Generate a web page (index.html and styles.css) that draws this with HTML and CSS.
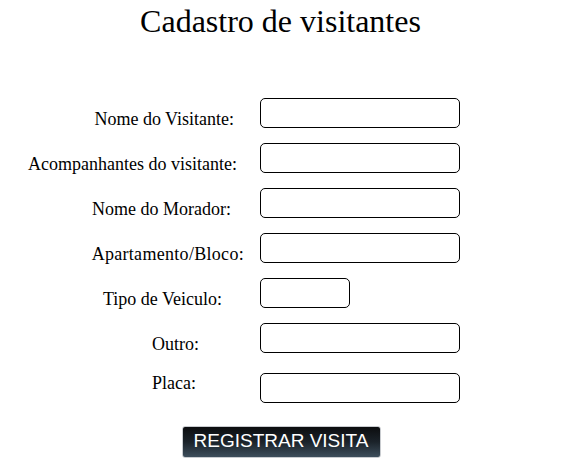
FILE: index.html
```html
<!DOCTYPE html>
<html lang="pt-BR">
<head>
  <meta charset="UTF-8">
  <meta name="viewport" content="width=device-width, initial-scale=1.0">
  <title>Cadastro de visitantes</title>
  <link rel="stylesheet" href="styles.css">
</head>
<body>
  <h1>Cadastro de visitantes</h1>

  <form class="cadastro">
    <div class="linhas">
      <label class="rotulo r-visitante" for="visitante">Nome do Visitante:</label>
      <input class="campo" type="text" id="visitante">

      <label class="rotulo r-acomp" for="acomp">Acompanhantes do visitante:</label>
      <input class="campo" type="text" id="acomp">

      <label class="rotulo r-morador" for="morador">Nome do Morador:</label>
      <input class="campo" type="text" id="morador">

      <label class="rotulo r-apto" for="apto">Apartamento/Bloco:</label>
      <input class="campo" type="text" id="apto">

      <label class="rotulo r-tipo" for="tipo">Tipo de Veiculo:</label>
      <input class="campo campo-curto" type="text" id="tipo">

      <label class="rotulo r-outro" for="outro">Outro:</label>
      <input class="campo" type="text" id="outro">

      <label class="rotulo r-placa" for="placa">Placa:</label>
      <input class="campo campo-placa" type="text" id="placa">
    </div>

    <div class="acoes">
      <button type="button">REGISTRAR VISITA</button>
    </div>
  </form>
</body>
</html>
```

FILE: styles.css
```css
* {
  margin: 0;
  padding: 0;
  box-sizing: border-box;
}

body {
  font-family: 'Liberation Serif', 'Times New Roman', serif;
  font-size: 18px;
  color: #000;
  background: #fff;
}

h1 {
  font-size: 32px;
  font-weight: normal;
  text-align: center;
  padding-top: 3px;
  height: 98px;
}

.linhas {
  display: grid;
  grid-template-columns: 244px 200px;
  grid-auto-rows: 30px;
  column-gap: 16px;
  row-gap: 15px;
}

.rotulo {
  text-align: right;
  padding-top: 11px;
  line-height: 20px;
  white-space: nowrap;
}

.r-visitante { padding-right: 10px; }
.r-acomp { padding-right: 7px; }
.r-morador { padding-right: 13px; }
.r-apto { padding-right: 0; letter-spacing: 0.3px; }
.r-tipo { padding-right: 22px; }
.r-outro { padding-right: 45px; }
.r-placa { padding-right: 48px; padding-top: 0; margin-top: 5px; }

.campo {
  width: 200px;
  height: 30px;
  border: 1px solid #000;
  border-radius: 5px;
  background: #fff;
  font-family: inherit;
  font-size: 16px;
  padding: 0 6px;
}

.campo-placa {
  margin-top: 5px;
}

.campo-curto {
  width: 90px;
}

.acoes {
  display: flex;
  justify-content: center;
  padding-left: 1px;
  margin-top: 28px;
}

button {
  width: 199px;
  height: 32px;
  padding-bottom: 2px;
  font-family: 'Liberation Sans', Arial, sans-serif;
  font-size: 19px;
  color: #fff;
  border: 1px solid #c9ccd0;
  border-radius: 3px;
  background: linear-gradient(to bottom, #0c0d0f, #1b232a 50%, #3d4e5c);
  cursor: pointer;
}
```
